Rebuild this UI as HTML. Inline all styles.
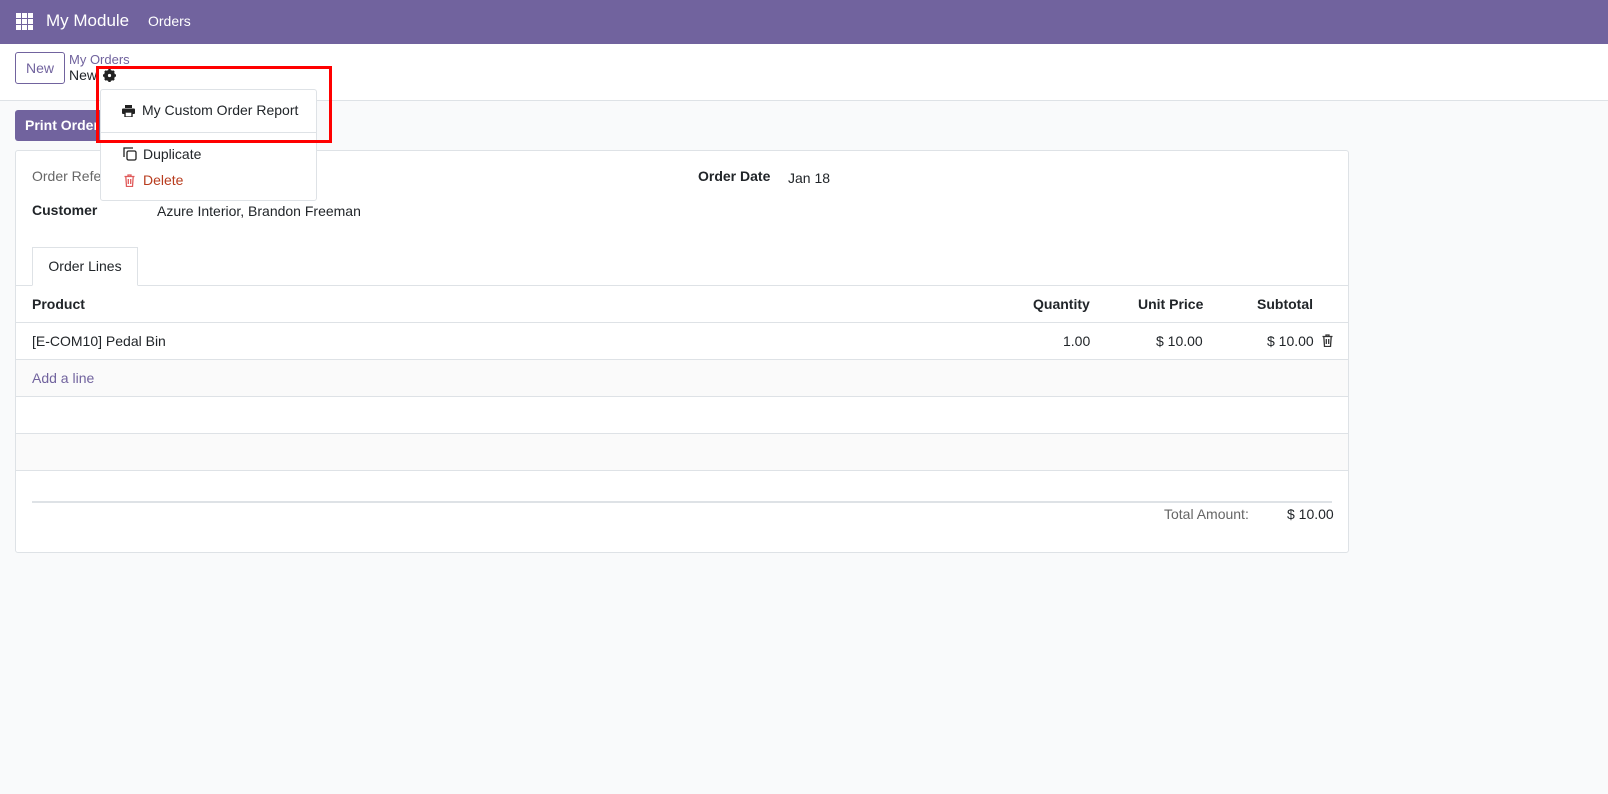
<!DOCTYPE html>
<html><head><meta charset="utf-8"><style>
*{box-sizing:border-box;margin:0;padding:0}
body{width:1608px;height:794px;background:#f9fafb;font-family:"Liberation Sans",sans-serif;font-size:14px;color:#212529;position:relative;overflow:hidden}
.a{position:absolute}
.nav{left:0;top:0;width:1608px;height:44px;background:#71639e;color:#fff}
.cp{left:0;top:44px;width:1608px;height:57px;background:#fff;border-bottom:1px solid #dee2e6}
.card{left:15px;top:150px;width:1334px;height:403px;background:#fff;border:1px solid #dee2e6;border-radius:3px}
.row{position:absolute;left:0;width:1332px;border-top:1px solid #dee2e6}
b{font-weight:bold}
</style></head><body>
<div class="a nav">
 <svg class="a" style="left:16px;top:13px" width="17" height="17" viewBox="0 0 17 17" fill="#fff"><rect x="0" y="0" width="5" height="5"/><rect x="6" y="0" width="5" height="5"/><rect x="12" y="0" width="5" height="5"/><rect x="0" y="6" width="5" height="5"/><rect x="6" y="6" width="5" height="5"/><rect x="12" y="6" width="5" height="5"/><rect x="0" y="12" width="5" height="5"/><rect x="6" y="12" width="5" height="5"/><rect x="12" y="12" width="5" height="5"/></svg>
 <div class="a" style="left:46px;top:11px;font-size:17px">My Module</div>
 <div class="a" style="left:148px;top:13px;font-size:14px">Orders</div>
</div>
<div class="a cp">
 <div class="a" style="left:15px;top:8px;width:50px;height:32px;border:1px solid #71639e;border-radius:3px;color:#71639e;text-align:center;line-height:30px">New</div>
 <div class="a" style="left:69px;top:8px;font-size:13px;color:#71639e">My Orders</div>
 <div class="a" style="left:69px;top:23px;font-size:14px">New</div>
 <svg class="a" style="left:103px;top:25px" width="13" height="13" viewBox="0 0 13 13"><circle cx="6.5" cy="6.5" r="4" fill="none" stroke="#222" stroke-width="3"/><g stroke="#222" stroke-width="2.4"><line x1="6.5" y1="0" x2="6.5" y2="13"/><line x1="0" y1="6.5" x2="13" y2="6.5"/><line x1="2" y1="2" x2="11" y2="11"/><line x1="11" y1="2" x2="2" y2="11"/></g><circle cx="6.5" cy="6.5" r="1.6" fill="#fff"/></svg>
</div>
<div class="a" style="left:15px;top:110px;width:90px;height:31px;background:#71639e;color:#fff;border-radius:3px;font-weight:bold;padding:7px 10px;white-space:nowrap;overflow:hidden">Print Order</div>
<div class="a card">
 <div class="a" style="left:16px;top:17px;color:#666">Order Reference</div>
 <div class="a" style="left:682px;top:17px"><b>Order Date</b></div>
 <div class="a" style="left:772px;top:19px">Jan 18</div>
 <div class="a" style="left:16px;top:51px"><b>Customer</b></div>
 <div class="a" style="left:141px;top:52px">Azure Interior, Brandon Freeman</div>
 <div class="a" style="left:16px;top:96px;width:106px;height:39px;border:1px solid #dee2e6;border-bottom:1px solid #fff;background:#fff;text-align:center;line-height:37px;z-index:2">Order Lines</div>
 <div class="row" style="top:134px;height:37px"><b class="a" style="left:16px;top:10px">Product</b><b class="a" style="left:1017px;top:10px">Quantity</b><b class="a" style="left:1122px;top:10px">Unit Price</b><b class="a" style="left:1241px;top:10px">Subtotal</b></div>
 <div class="row" style="top:171px;height:37px"><span class="a" style="left:16px;top:10px">[E-COM10] Pedal Bin</span><span class="a" style="left:1047px;top:10px">1.00</span><span class="a" style="left:1140px;top:10px">$ 10.00</span><span class="a" style="left:1251px;top:10px">$ 10.00</span>
 <svg class="a" style="left:1306px;top:11px" width="11" height="13" viewBox="0 0 11 13" fill="none" stroke="#333" stroke-width="1.3"><path d="M0.5 2.5h10M4 2.5V1h3v1.5M1.8 2.5l0.7 10h6l0.7-10M4.3 5v5M6.7 5v5"/></svg></div>
 <div class="row" style="top:208px;height:37px;background:#fafafa"><span class="a" style="left:16px;top:10px;color:#71639e">Add a line</span></div>
 <div class="row" style="top:245px;height:37px"></div>
 <div class="row" style="top:282px;height:37px;background:#fafafa"></div>
 <div class="row" style="top:319px;height:1px"></div>
 <div class="a" style="left:16px;top:350px;width:1300px;border-top:2px solid #dee2e6"></div>
 <div class="a" style="left:1148px;top:355px;color:#666">Total Amount:</div>
 <div class="a" style="left:1271px;top:355px">$ 10.00</div>
</div>
<div class="a" style="left:100px;top:89px;width:217px;height:112px;background:#fff;border:1px solid #dee2e6;border-radius:3px;z-index:5">
 <svg class="a" style="left:21px;top:15px" width="13" height="12" viewBox="0 0 13 12"><rect x="3" y="0" width="7" height="3" fill="#222"/><rect x="0" y="3.5" width="13" height="5.5" rx="1" fill="#222"/><rect x="3" y="7" width="7" height="5" fill="#fff" stroke="#222" stroke-width="1.4"/></svg>
 <div class="a" style="left:41px;top:12px;font-size:14px">My Custom Order Report</div>
 <div class="a" style="left:0;top:42px;width:215px;border-top:1px solid #dee2e6"></div>
 <svg class="a" style="left:22px;top:57px" width="14" height="14" viewBox="0 0 14 14" fill="none" stroke="#222" stroke-width="1.3"><path d="M1 10V1h9"/><rect x="4" y="4" width="9" height="9" rx="1.5"/></svg>
 <div class="a" style="left:42px;top:56px">Duplicate</div>
 <svg class="a" style="left:23px;top:84px" width="11" height="13" viewBox="0 0 11 13" fill="none" stroke="#e05a5a" stroke-width="1.3"><path d="M0.5 2.5h10M4 2.5V1h3v1.5M1.8 2.5l0.7 10h6l0.7-10M4.3 5v5M6.7 5v5"/></svg>
 <div class="a" style="left:42px;top:82px;color:#b83c1e">Delete</div>
</div>
<div class="a" style="left:96px;top:66px;width:236px;height:77px;border:3px solid #f00;z-index:6"></div>
</body></html>
